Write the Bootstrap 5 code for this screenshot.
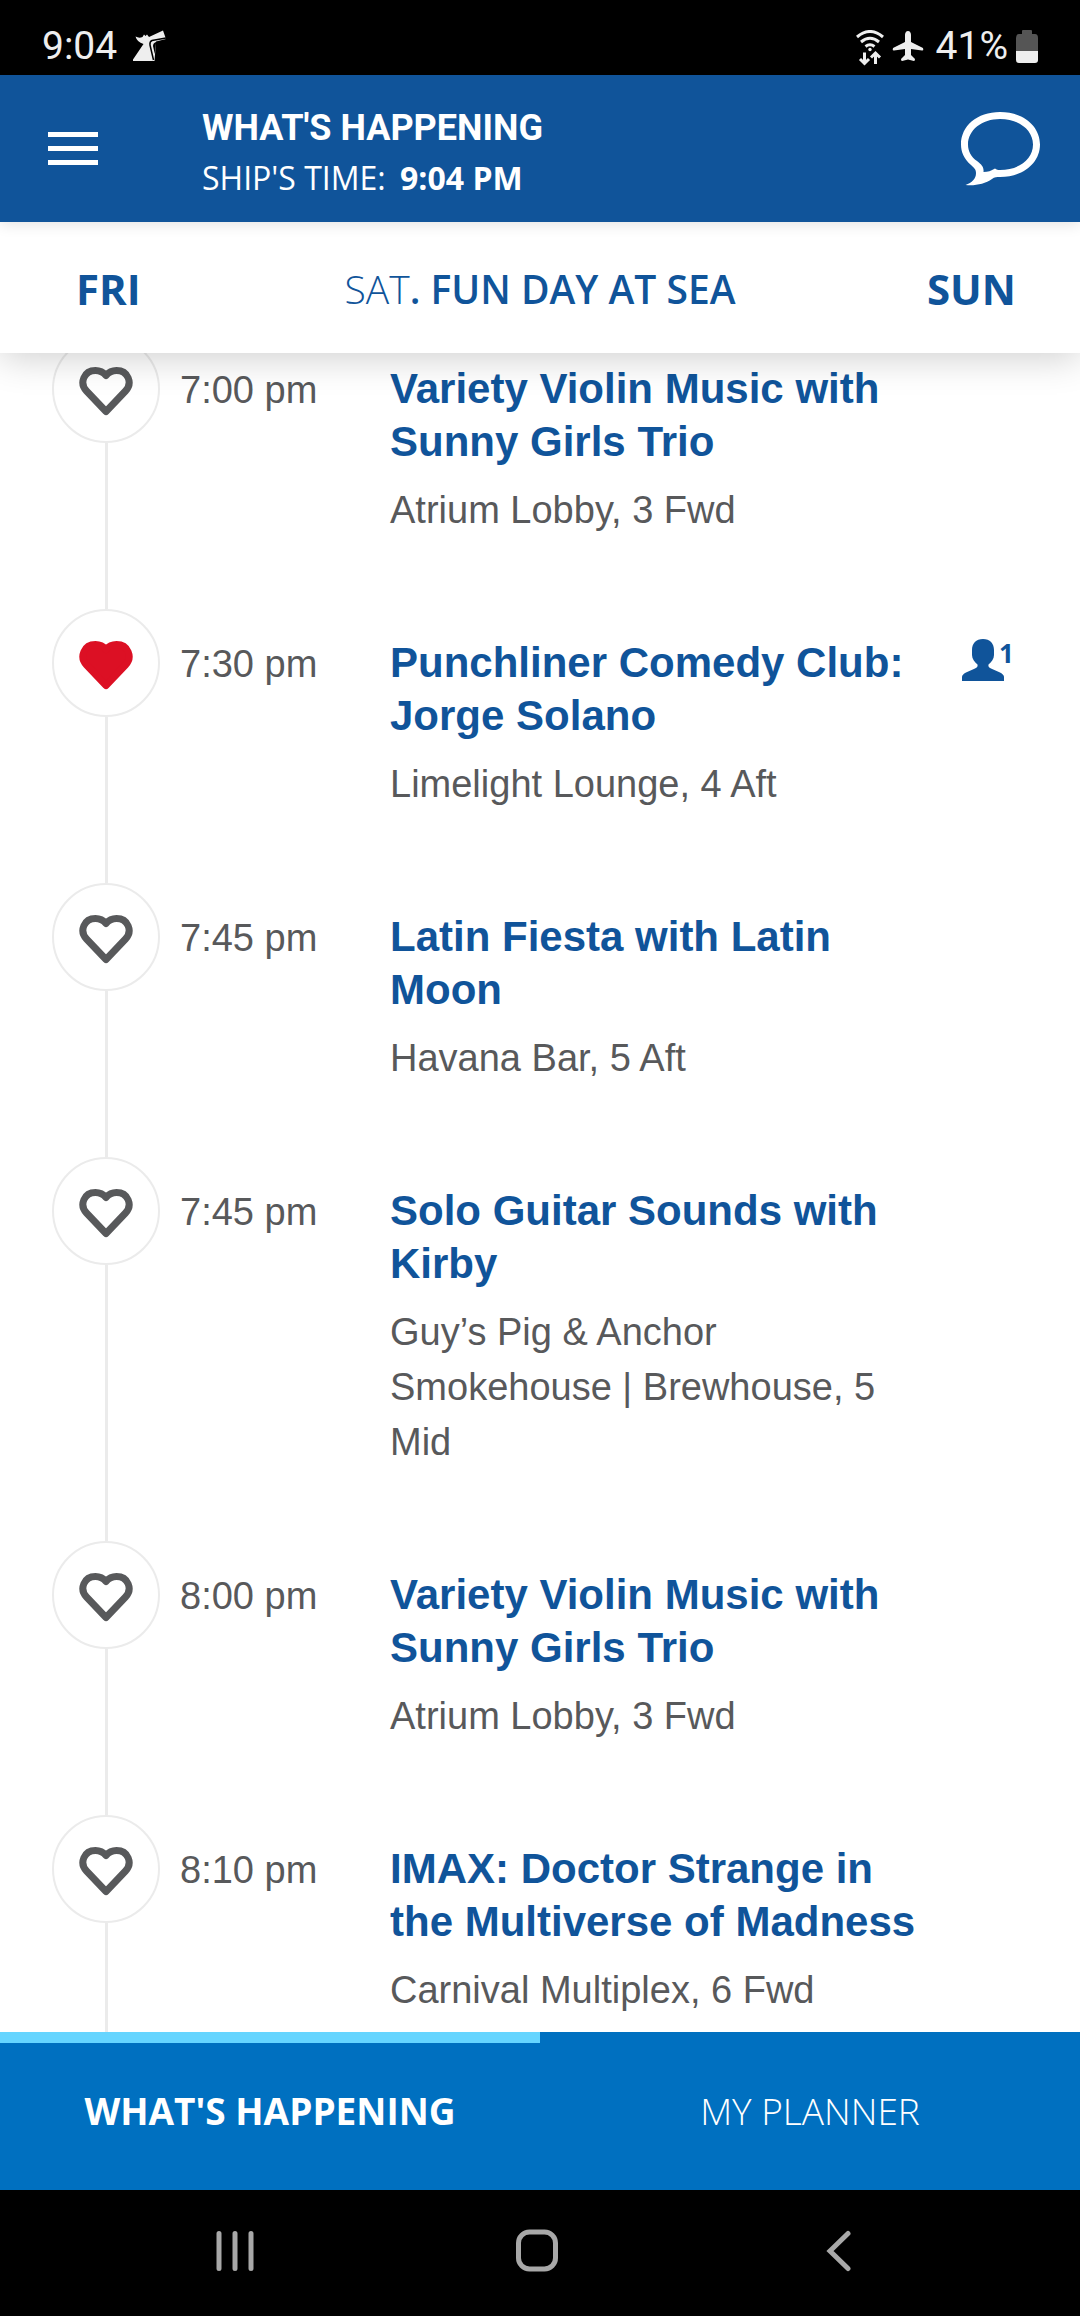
<!DOCTYPE html>
<html lang="en">
<head>
<meta charset="utf-8">
<meta name="viewport" content="width=device-width, initial-scale=1">
<title>What's Happening</title>
<link href="https://cdn.jsdelivr.net/npm/bootstrap@5.3.0/dist/css/bootstrap.min.css" rel="stylesheet">
<style>
  body { font-family: "Open Sans", sans-serif; color: #58595b; height: 100vh; }
  svg { display: block; flex: none; }

  .status-bar { height: 75px; padding: 15px 42px 0 42px; background: #000; color: #eee; font: 400 39px/62px Roboto, sans-serif; }
  .status-bar svg { margin-top: 15px; }

  .app-header { height: 147px; padding: 0 40px 0 48px; background: #10549a; color: #fff; box-shadow: 0 2px 14px rgba(0,0,0,.12); z-index: 2; }
  .app-header button { color: inherit; }
  .heading-block { margin-left: 104px; padding-top: 6px; }
  .app-title { font: 700 36px/52px "Roboto", "Open Sans", sans-serif; margin: 0; }
  .ship-time { font-size: 32px; line-height: 48px; font-weight: 400; }
  .ship-time strong { margin-left: 6px; }

  .day-bar { height: 131px; padding: 2px 64px 0; background: #fff; color: #10549a; font-size: 42px; box-shadow: 0 4px 36px rgba(0,0,0,.2); z-index: 1; }
  .day-bar a { flex: 1 1 0; color: inherit; text-decoration: none; font-weight: 700; }
  .day-bar a:first-child { text-indent: 12px; }
  .day-bar h2 { margin: 0; font-size: 39px; line-height: 60px; font-weight: 600; }
  .day-bar h2 span { font-weight: 300; }

  .schedule { min-height: 0; background: #fff; font-family: "Liberation Sans", Arial, sans-serif; }
  .schedule ul { margin-top: -18px; padding: 0 52px; }
  .rail { width: 108px; }
  .fav { width: 108px; height: 108px; border: 2px solid #ebebeb; border-radius: 50%; background: #fff; padding: 4px 0 0; color: #58595b; fill: none; }
  .fav.is-on { color: #dc1024; fill: currentColor; }
  .rail-line { width: 3px; background: #ebebeb; }
  .event-time { width: 230px; padding: 28px 0 0 20px; font-size: 38px; line-height: 55px; }
  .event-text { width: 540px; padding: 27px 0 71px; }
  .event-text h3 { margin: 0 0 15px; font-size: 42px; line-height: 53px; font-weight: 700; color: #10549a; }
  .event-text p { margin: 0; font-size: 38px; line-height: 55px; }
  .friends { padding: 30px 0 0 32px; color: #10549a; }
  .friends span { margin-left: -5px; font: 700 26px/28px "Open Sans", sans-serif; }

  .tab-bar { height: 158px; background: #0070c0; z-index: 1; }
  .tab-bar a { color: #fff; text-decoration: none; font-size: 37px; border-top: 11px solid transparent; padding-bottom: 11px; font-weight: 300; }
  .tab-bar a.active { border-color: #66d5ff; font-weight: 700; }

  .system-nav { height: 126px; padding: 0 7px 5px 0; background: #000; gap: 240px; }
  .system-nav button { width: 62px; height: 62px; padding: 0; border: 0; background: none; color: #a8a8a8; }
  .system-nav svg { margin: auto; fill: none; stroke: currentColor; stroke-width: 5; stroke-linecap: round; }
</style>
<script src="https://cdn.jsdelivr.net/npm/bootstrap@5.3.0/dist/js/bootstrap.bundle.min.js"></script>
</head>
<body class="d-flex flex-column overflow-hidden">

<svg width="0" height="0" class="d-none" aria-hidden="true">
  <symbol id="heart" viewBox="0 0 54 52">
    <path d="M27 46.500 L7.500 26 C0 18 5 5.500 16.500 5.500 C21 5.500 24.500 7.500 27 10.500 C29.500 7.500 33 5.500 37.500 5.500 C49 5.500 54 18 46.500 26 Z" stroke="currentColor" stroke-width="7" stroke-linejoin="round"/>
  </symbol>
</svg>

<div class="status-bar d-flex justify-content-between flex-shrink-0">
  <div class="d-flex gap-3">
    <span>9:04</span>
    <svg width="34" height="32" viewBox="1 0 34 32"><path fill="#eee" d="M3.500 6.500Q7 8.500 10.500 7L12 4.500L13.500 6L15 4.500L17 7L31 0.500L34 9L24 11.500L22.500 31H0L11.500 14Q5 12 3.500 6.500Z"/><path fill="none" stroke="#000" stroke-width="1.500" d="M34 8L20 10.500Q17.500 11.500 18 15L21.500 30"/><path d="M34 12L24 13L22.800 24L21 16Q21 13 24 12Z"/></svg>
  </div>
  <div class="d-flex">
    <svg width="28" height="36" viewBox="0 0 28 36" fill="none" stroke="#eee" stroke-width="3" aria-hidden="true">
      <path d="M1 7Q14-4 27 7M5 12Q14 4.500 23 12M9.500 16.500Q14 13 18.500 16.500"/>
      <path d="M8.500 22.500V33M4 29L8.500 33.500L13 29M19.500 34V23.500M15 27.500L19.500 23L24 27.500"/>
      <circle cx="14" cy="19.500" r="1.700" fill="#eee" stroke="none"/>
    </svg>
    <svg class="ms-2 me-1" width="32" height="32" viewBox="0 0 32 32" fill="#eee" aria-hidden="true"><path d="M16 1C18 1 19 3 19 5V12L31 18Q32 21 30 20.500L19 19V25L23 29Q23 31 22 31L16 29.500L10 31Q9 31 9 29L13 25V19L2 20.500Q0 21 1 18L13 12V5C13 3 14 1 16 1Z"/></svg>
    <span class="ms-2 me-1">41%</span>
    <svg class="ms-1" width="22" height="34" viewBox="0 0 22 34" aria-hidden="true"><path fill="#555" d="M6 1Q6 0 7 0H15Q16 0 16 1V4H19Q22 4 22 8V22H0V8Q0 4 3 4H6Z"/><path fill="#eee" d="M0 21H22V30Q22 33 19 33H3Q0 33 0 30Z"/></svg>
  </div>
</div>

<header class="app-header d-flex align-items-center flex-shrink-0 position-relative">
  <button class="btn p-0 border-0 rounded-0" aria-label="Menu"><svg width="50" height="34" fill="currentColor"><path d="M0 0h50v5H0zM0 14h50v5H0zM0 28h50v5H0z"/></svg></button>
  <div class="heading-block">
    <h1 class="app-title">WHAT'S HAPPENING</h1>
    <div class="ship-time">SHIP'S TIME: <strong>9:04 PM</strong></div>
  </div>
  <button class="btn p-0 border-0 rounded-0 ms-auto" aria-label="Chat"><svg width="80" height="74" viewBox="0 0 80 74"><path fill="currentColor" fill-rule="evenodd" d="M40 0C63 0 80 14 80 32.500C80 51 63 65 40 65C37 65 34.500 65 32 67C25 72 15 74 5.500 73C12 70.500 16 67 16 61C16 57 14 56 11 53C4 47 1 40 1 32.500C1 14 17 0 40 0ZM40 7C22 7 8 18 8 32.500C8 39 11 45 17 49C22 53 24 55 23.500 60C28 60 31 59 35 56.500C36.500 58 38 58 40 58C59 58 73 47 73 32.500C73 18 59 7 40 7Z"/></svg></button>
</header>

<nav class="day-bar d-flex align-items-center flex-shrink-0 position-relative" aria-label="Days">
  <a href="#">FRI</a>
  <h2><span>SAT</span>. FUN DAY AT SEA</h2>
  <a class="text-end" href="#">SUN</a>
</nav>

<main class="schedule flex-fill overflow-hidden">
  <ul class="list-unstyled mb-0">
    <li class="d-flex">
      <div class="rail d-flex flex-column align-items-center flex-shrink-0"><button class="fav" aria-label="Add to favorites"><svg class="mx-auto" width="54" height="52"><use href="#heart"/></svg></button><div class="rail-line flex-fill"></div></div>
      <div class="event-time flex-shrink-0">7:00 pm</div>
      <div class="event-text"><h3>Variety Violin Music with Sunny Girls Trio</h3><p>Atrium Lobby, 3 Fwd</p></div>
    </li>
    <li class="d-flex">
      <div class="rail d-flex flex-column align-items-center flex-shrink-0"><button class="fav is-on" aria-label="Remove from favorites"><svg class="mx-auto" width="54" height="52"><use href="#heart"/></svg></button><div class="rail-line flex-fill"></div></div>
      <div class="event-time flex-shrink-0">7:30 pm</div>
      <div class="event-text"><h3>Punchliner Comedy Club: Jorge Solano</h3><p>Limelight Lounge, 4 Aft</p></div>
      <div class="friends d-flex align-items-start"><svg width="42" height="42" viewBox="0 0 42 42" fill="currentColor" aria-hidden="true"><path d="M21 0C28 0 32 4.500 32 11V16C32 20 29.500 23 26.500 25.500C26 27.500 27 28.500 29 29.500L38 33.500Q42 35.500 42 38V42H0V38Q0 35.500 4 33.500L13 29.500C15 28.500 16 27.500 15.500 25.500C12.500 23 10 20 10 16V11C10 4.500 14 0 21 0Z"/></svg><span>1</span></div>
    </li>
    <li class="d-flex">
      <div class="rail d-flex flex-column align-items-center flex-shrink-0"><button class="fav" aria-label="Add to favorites"><svg class="mx-auto" width="54" height="52"><use href="#heart"/></svg></button><div class="rail-line flex-fill"></div></div>
      <div class="event-time flex-shrink-0">7:45 pm</div>
      <div class="event-text"><h3>Latin Fiesta with Latin Moon</h3><p>Havana Bar, 5 Aft</p></div>
    </li>
    <li class="d-flex">
      <div class="rail d-flex flex-column align-items-center flex-shrink-0"><button class="fav" aria-label="Add to favorites"><svg class="mx-auto" width="54" height="52"><use href="#heart"/></svg></button><div class="rail-line flex-fill"></div></div>
      <div class="event-time flex-shrink-0">7:45 pm</div>
      <div class="event-text"><h3>Solo Guitar Sounds with Kirby</h3><p>Guy’s Pig &amp; Anchor Smokehouse | Brewhouse, 5 Mid</p></div>
    </li>
    <li class="d-flex">
      <div class="rail d-flex flex-column align-items-center flex-shrink-0"><button class="fav" aria-label="Add to favorites"><svg class="mx-auto" width="54" height="52"><use href="#heart"/></svg></button><div class="rail-line flex-fill"></div></div>
      <div class="event-time flex-shrink-0">8:00 pm</div>
      <div class="event-text"><h3>Variety Violin Music with Sunny Girls Trio</h3><p>Atrium Lobby, 3 Fwd</p></div>
    </li>
    <li class="d-flex">
      <div class="rail d-flex flex-column align-items-center flex-shrink-0"><button class="fav" aria-label="Add to favorites"><svg class="mx-auto" width="54" height="52"><use href="#heart"/></svg></button><div class="rail-line flex-fill"></div></div>
      <div class="event-time flex-shrink-0">8:10 pm</div>
      <div class="event-text"><h3>IMAX: Doctor Strange in the Multiverse of Madness</h3><p>Carnival Multiplex, 6 Fwd</p></div>
    </li>
  </ul>
</main>

<nav class="tab-bar d-flex flex-shrink-0" aria-label="Sections">
  <a class="active w-50 d-flex align-items-center justify-content-center" href="#">WHAT'S HAPPENING</a>
  <a class="w-50 d-flex align-items-center justify-content-center" href="#">MY PLANNER</a>
</nav>

<div class="system-nav d-flex justify-content-center align-items-center flex-shrink-0">
  <button aria-label="Recent apps"><svg width="40" height="42" viewBox="0 0 40 42"><path d="M4 3.500V38.500M20 3.500V38.500M36 3.500V38.500"/></svg></button>
  <button aria-label="Home"><svg width="42" height="43" viewBox="0 0 42 43"><rect x="2.500" y="3" width="37" height="37" rx="11"/></svg></button>
  <button aria-label="Back"><svg width="26" height="42" viewBox="0 0 26 42"><path d="M22 3.500L4 21L22 38.500"/></svg></button>
</div>
</body>
</html>
